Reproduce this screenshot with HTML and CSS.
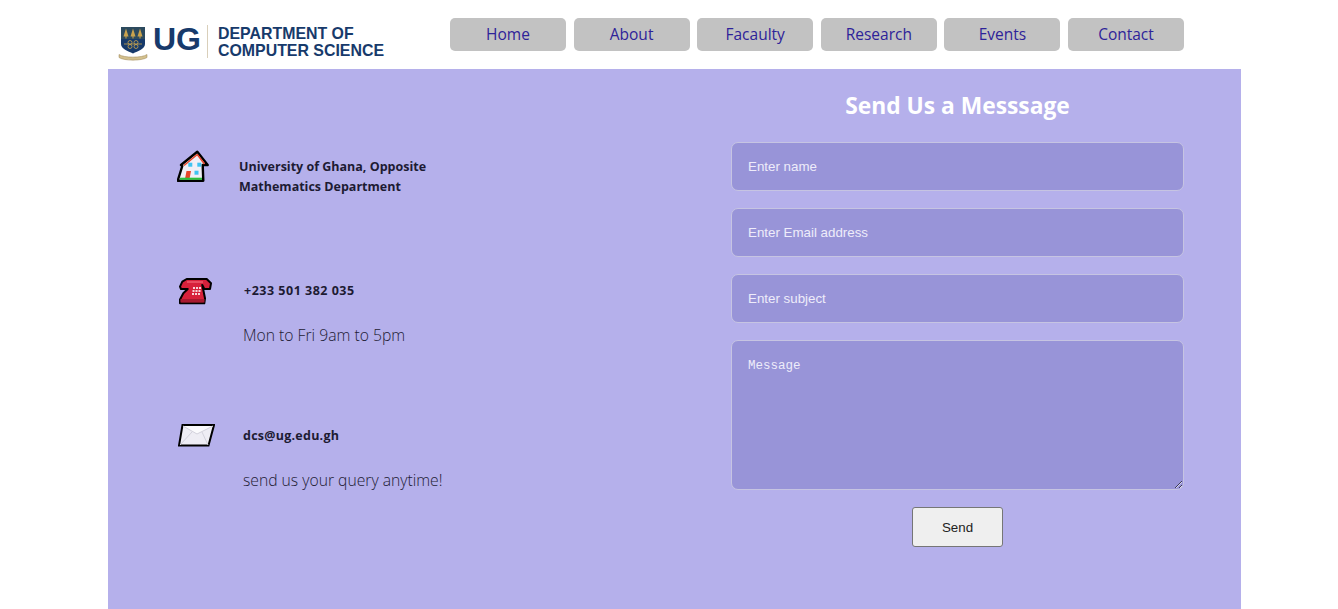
FILE: index.html
```html
<!DOCTYPE html>
<html lang="en">
<head>
    <meta charset="UTF-8">
    <title>Contact</title>
    <link rel="stylesheet" href="styles.css">
</head>
<body>
<header class="header">
    <a class="logo" href="#">
        <svg class="crest" width="30" height="35" viewBox="0 0 30 35">
            <path d="M3 1H27V18C27 23 20 25 15 27.500C10 25 3 23 3 18Z" fill="#173a6b"/>
            <rect x="3" y="1" width="24" height="12" fill="#2c4a5e"/>
            <path d="M8 2.500L10.500 10.500H5.500ZM15 2.500L17.500 10.500H12.500ZM22 2.500L24.500 10.500H19.500Z" fill="#c9a34e"/>
            <path d="M8 10V12.500M15 10V12.500M22 10V12.500" stroke="#c9a34e"/>
            <path d="M6 18H24" stroke="#c9a34e" stroke-width="0.8"/>
            <circle cx="12" cy="16.500" r="2" fill="none" stroke="#c9a34e" stroke-width="0.8"/>
            <circle cx="18" cy="16.500" r="2" fill="none" stroke="#c9a34e" stroke-width="0.8"/>
            <circle cx="12" cy="20.500" r="2" fill="none" stroke="#c9a34e" stroke-width="0.8"/>
            <circle cx="18" cy="20.500" r="2" fill="none" stroke="#c9a34e" stroke-width="0.8"/>
            <path d="M1 28.500C6 32 24 32 29 28.500V31.500C24 35 6 35 1 31.500Z" fill="#d3c08e" stroke="#9a8350" stroke-width="0.5"/>
        </svg>
        <span class="logo-ug">UG</span>
        <span class="logo-dept">DEPARTMENT OF<br>COMPUTER SCIENCE</span>
    </a>
    <nav class="nav">
        <a href="#">Home</a>
        <a href="#">About</a>
        <a href="#">Facaulty</a>
        <a href="#">Research</a>
        <a href="#">Events</a>
        <a href="#">Contact</a>
    </nav>
</header>

<main class="main">
    <section class="info">
        <div class="info-item item-home">
            <svg width="32" height="33" viewBox="0 0 32 33">
                <path d="M20.300 1.700L30.700 15H25.700L26.300 30.700H.7L5.300 16L4 15Z" fill="#f1eff6" stroke="#000" stroke-width="2.400" stroke-linejoin="round"/>
                <path d="M20.300 4.500L7 15.500M20.300 4.500L27.500 14" stroke="#e8452a" stroke-width="1.500" fill="none"/>
                <rect x="11.300" y="12.700" width="4" height="4" fill="#3fc4f2"/>
                <rect x="20.300" y="12.700" width="4" height="4" fill="#3fc4f2"/>
                <rect x="17.500" y="20.700" width="4" height="4" fill="#3fc4f2"/>
                <path d="M9.500 21H14L12.500 29H8Z" fill="#e8452a"/>
                <path d="M3 27.700H25V29.800H3Z" fill="#2bc03c"/>
            </svg>
            <p class="item-title">University of Ghana, Opposite<br>Mathematics Department</p>
        </div>

        <div class="info-item item-phone">
            <svg width="34" height="28" viewBox="0 0 34 28">
                <path d="M7.700 2H27.700L32 6.300L31 12H25.300L23.300 8L26 21.300L25.300 26.300H1L0.800 23L4.300 16.300L8.700 12H2L1 9.700L3.300 4.700Z" fill="#d7213b" stroke="#000" stroke-width="2" stroke-linejoin="round"/>
                <path d="M1.500 22H25.500V25.500H1.500Z" fill="#a81a30"/>
                <path d="M8 5H24" stroke="#ee5a6e" stroke-width="1.500"/>
                <g fill="#f7d5da">
                    <rect x="14" y="10" width="2" height="2"/><rect x="17" y="10" width="2" height="2"/><rect x="20" y="10" width="2" height="2"/>
                    <rect x="13.500" y="13" width="2" height="2"/><rect x="16.500" y="13" width="2" height="2"/><rect x="19.500" y="13" width="2" height="2"/>
                    <rect x="13" y="16" width="2" height="2"/><rect x="16" y="16" width="2" height="2"/><rect x="19" y="16" width="2" height="2"/>
                </g>
            </svg>
            <div class="item-text">
                <p class="item-title">+233 501 382 035</p>
                <p class="item-note">Mon to Fri 9am to 5pm</p>
            </div>
        </div>

        <div class="info-item item-mail">
            <svg width="37" height="23" viewBox="0 0 37 23">
                <path d="M4.500 1H36L30.500 21.500H1Z" fill="#eeedf4" stroke="#000" stroke-width="2"/>
                <path d="M5 2L19 10L35 2" fill="#fbfbfd" stroke="#d3d2dc"/>
                <path d="M2 21L14 8M30 21L24 8" stroke="#d3d2dc" fill="none"/>
            </svg>
            <div class="item-text">
                <p class="item-title">dcs@ug.edu.gh</p>
                <p class="item-note">send us your query anytime!</p>
            </div>
        </div>
    </section>

    <form class="contact-form">
        <h2>Send Us a Messsage</h2>
        <input type="text" placeholder="Enter name">
        <input type="text" placeholder="Enter Email address">
        <input type="text" placeholder="Enter subject">
        <textarea placeholder="Message"></textarea>
        <button type="button">Send</button>
    </form>
</main>
</body>
</html>
```

FILE: styles.css
```css
* {
    padding: 0;
    margin: 0;
    box-sizing: border-box;
}

html, body {
    height: 609px;
    overflow: hidden;
}

body {
    background: #fff;
    font-family: "Open Sans", "Noto Sans", sans-serif;
}

.header {
    height: 69px;
    width: 1133px;
    margin-left: 108px;
    display: flex;
    align-items: flex-start;
}

.logo {
    display: flex;
    align-items: flex-start;
    width: 342px;
    height: 69px;
    padding-left: 10px;
    color: #173a6b;
    text-decoration: none;
    font-family: "Liberation Sans", sans-serif;
    font-weight: bold;
}

.crest {
    margin-top: 26px;
}

.logo-ug {
    width: 59px;
    margin-top: 22px;
    padding-left: 5px;
    font-size: 32px;
    line-height: 35px;
}

.logo-dept {
    height: 33px;
    margin-top: 25px;
    padding-left: 10px;
    border-left: 1px solid #d9cfba;
    font-size: 15.900px;
    line-height: 17px;
    white-space: nowrap;
}

.nav {
    display: flex;
    gap: 7.600px;
    padding-top: 18px;
}

.nav a {
    display: block;
    width: 116px;
    height: 33px;
    line-height: 33px;
    text-align: center;
    background: #c2c2c2;
    border-radius: 5px;
    color: #2e2399;
    font-size: 15.500px;
    text-decoration: none;
}

.main {
    width: 1133px;
    height: 540px;
    margin-left: 108px;
    background: #b5b0eb;
    display: flex;
}

.info {
    width: 623px;
    padding: 81px 0 0 69px;
    color: #1d1b33;
}

.info-item {
    display: flex;
    align-items: flex-start;
}

.item-home {
    gap: 30px;
}

.item-home .item-title {
    padding-top: 7px;
}

.item-phone {
    margin-top: 80px;
    padding-left: 2px;
    gap: 30px;
}

.item-phone .item-text {
    padding-top: 4px;
}

.item-phone .item-title {
    padding-left: 1px;
    letter-spacing: 0.500px;
}

.item-mail {
    margin-top: 79px;
    padding-left: 1px;
    gap: 28px;
}

.item-mail .item-text {
    padding-top: 2px;
}

.item-mail .item-title {
    letter-spacing: 0.250px;
}

.item-title {
    font-size: 12.500px;
    font-weight: 700;
    line-height: 20px;
}

.item-note {
    margin-top: 24px;
    font-size: 15.700px;
    font-weight: 300;
    line-height: 20px;
}

.contact-form {
    width: 453px;
    display: flex;
    flex-direction: column;
    align-items: center;
}

.contact-form h2 {
    height: 73px;
    line-height: 74px;
    font-size: 22.800px;
    font-weight: 700;
    color: #fff;
}

.contact-form input,
.contact-form textarea {
    display: block;
    width: 453px;
    height: 49px;
    margin-bottom: 17px;
    padding: 0 16px;
    background: #9894d8;
    border: 1px solid #c6c4e2;
    border-radius: 7px;
    color: #fff;
    font-family: "Liberation Sans", sans-serif;
    font-size: 13.333px;
    outline: none;
}

.contact-form textarea {
    height: 150px;
    padding: 18px 16px;
    font-family: "Liberation Mono", monospace;
    font-size: 12.500px;
}

.contact-form input::placeholder,
.contact-form textarea::placeholder {
    color: #eeecfa;
    opacity: 1;
}

.contact-form button {
    width: 91px;
    height: 40px;
    background: #efefef;
    border: 1px solid #767676;
    border-radius: 3px;
    color: #222;
    font-family: "Liberation Sans", sans-serif;
    font-size: 13.333px;
}
```
